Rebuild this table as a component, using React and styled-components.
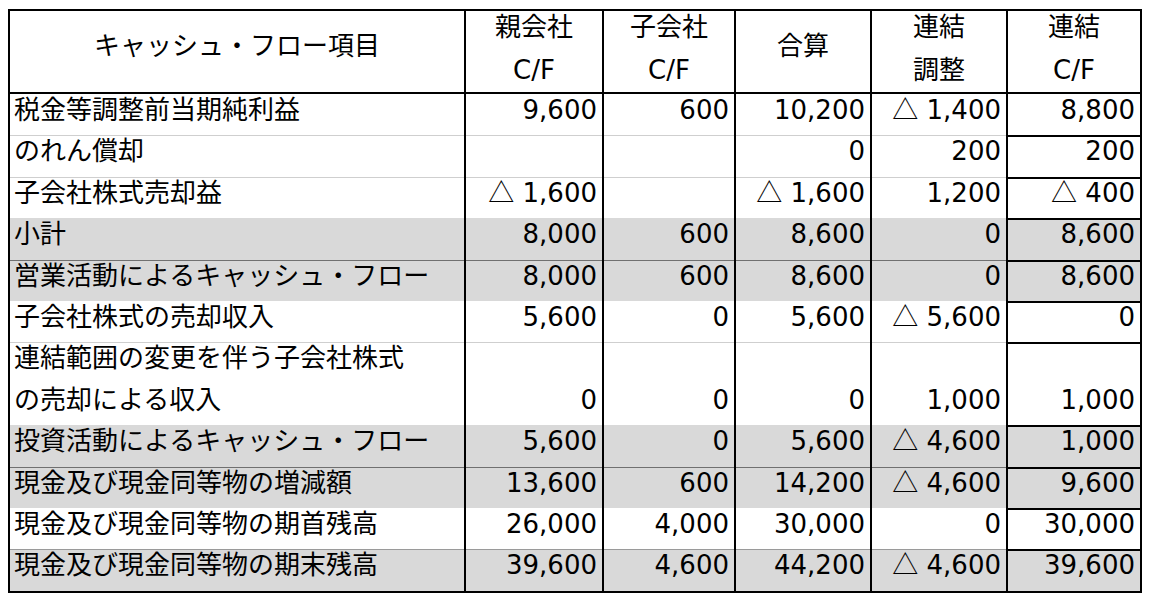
import React from "react"
import styled, { createGlobalStyle } from "styled-components"

const GlobalStyle = createGlobalStyle`
  body {
    margin: 9px 8px;
    background: #fff;
  }
`

const Sheet = styled.table`
  border-collapse: separate;
  border-spacing: 0;
  table-layout: fixed;
  width: 1134px;
  border-top: 2px solid #000;
  border-left: 2px solid #000;
  border-bottom: 2px solid #000;
  font-family: "DejaVu Sans", "Noto Sans CJK JP", sans-serif;
  font-size: 26px;
  color: #000;
`

const lineShadows = {
  none: "none",
  light: "inset 0 1px 0 #cfcfcf",
  mid: "inset 0 1px 0 #9a9a9a",
  dark: "inset 0 1px 0 #707070",
  box: "inset 0 2px 0 #000",
}

const HeadCell = styled.th`
  box-sizing: border-box;
  height: 83px;
  padding: ${({ $single }) => ($single ? "19px 0 0" : "0")};
  font-weight: normal;
  text-align: center;
  vertical-align: top;
  border-right: 2px solid #000;
  border-bottom: 2px solid #000;
`

const HeadLine = styled.div`
  line-height: 32px;
  white-space: nowrap;

  & + & {
    margin-top: 11px;
  }
`

const Cell = styled.td`
  padding: 0 5px 0 ${({ $label }) => ($label ? "4px" : "5px")};
  text-align: ${({ $label }) => ($label ? "left" : "right")};
  vertical-align: bottom;
  white-space: nowrap;
  background: ${({ $shade }) => ($shade ? "#d9d9d9" : "#fff")};
  border-right: 2px solid #000;
  box-shadow: ${({ $line }) => lineShadows[$line || "none"]};
`

const Line = styled.div`
  height: 41.42px;
  line-height: 33px;
`

const Tri = styled.span`
  font-family: "Noto Sans CJK JP", sans-serif;
  line-height: 0;
`

const widths = [456, 138, 132, 136, 136, 134]

const rows = [
  { label: "税金等調整前当期純利益", v: ["9,600", "600", "10,200", "△ 1,400", "8,800"] },
  { label: "のれん償却", v: ["", "", "0", "200", "200"], line: "light" },
  { label: "子会社株式売却益", v: ["△ 1,600", "", "△ 1,600", "1,200", "△ 400"], line: "light" },
  { label: "小計", v: ["8,000", "600", "8,600", "0", "8,600"], shade: true },
  { label: "営業活動によるキャッシュ・フロー", v: ["8,000", "600", "8,600", "0", "8,600"], shade: true, line: "dark" },
  { label: "子会社株式の売却収入", v: ["5,600", "0", "5,600", "△ 5,600", "0"] },
  { label: ["連結範囲の変更を伴う子会社株式", "の売却による収入"], v: ["0", "0", "0", "1,000", "1,000"], line: "light" },
  { label: "投資活動によるキャッシュ・フロー", v: ["5,600", "0", "5,600", "△ 4,600", "1,000"], shade: true },
  { label: "現金及び現金同等物の増減額", v: ["13,600", "600", "14,200", "△ 4,600", "9,600"], shade: true, line: "dark" },
  { label: "現金及び現金同等物の期首残高", v: ["26,000", "4,000", "30,000", "0", "30,000"] },
  { label: "現金及び現金同等物の期末残高", v: ["39,600", "4,600", "44,200", "△ 4,600", "39,600"], shade: true, line: "mid" },
]

const heads = [
  ["キャッシュ・フロー項目"],
  ["親会社", "C/F"],
  ["子会社", "C/F"],
  ["合算"],
  ["連結", "調整"],
  ["連結", "C/F"],
]

function Amount({ value }) {
  if (value.startsWith("△")) {
    return (
      <>
        <Tri>△</Tri>
        {value.slice(1)}
      </>
    )
  }
  return value
}

export default function App() {
  return (
    <>
      <GlobalStyle />
      <Sheet>
        <colgroup>
          {widths.map((w, i) => (
            <col key={i} style={{ width: w }} />
          ))}
        </colgroup>
        <thead>
          <tr>
            {heads.map((lines, i) => (
              <HeadCell key={i} $single={lines.length === 1}>
                {lines.map((t) => (
                  <HeadLine key={t}>{t}</HeadLine>
                ))}
              </HeadCell>
            ))}
          </tr>
        </thead>
        <tbody>
          {rows.map((r, i) => {
            const labels = Array.isArray(r.label) ? r.label : [r.label]
            return (
              <tr key={i}>
                <Cell $label $shade={r.shade} $line={r.line}>
                  {labels.map((t) => (
                    <Line key={t}>{t}</Line>
                  ))}
                </Cell>
                {r.v.map((val, j) => (
                  <Cell key={j} $shade={r.shade} $line={j === 4 && i > 0 ? "box" : r.line}>
                    <Line>
                      <Amount value={val} />
                    </Line>
                  </Cell>
                ))}
              </tr>
            )
          })}
        </tbody>
      </Sheet>
    </>
  )
}
